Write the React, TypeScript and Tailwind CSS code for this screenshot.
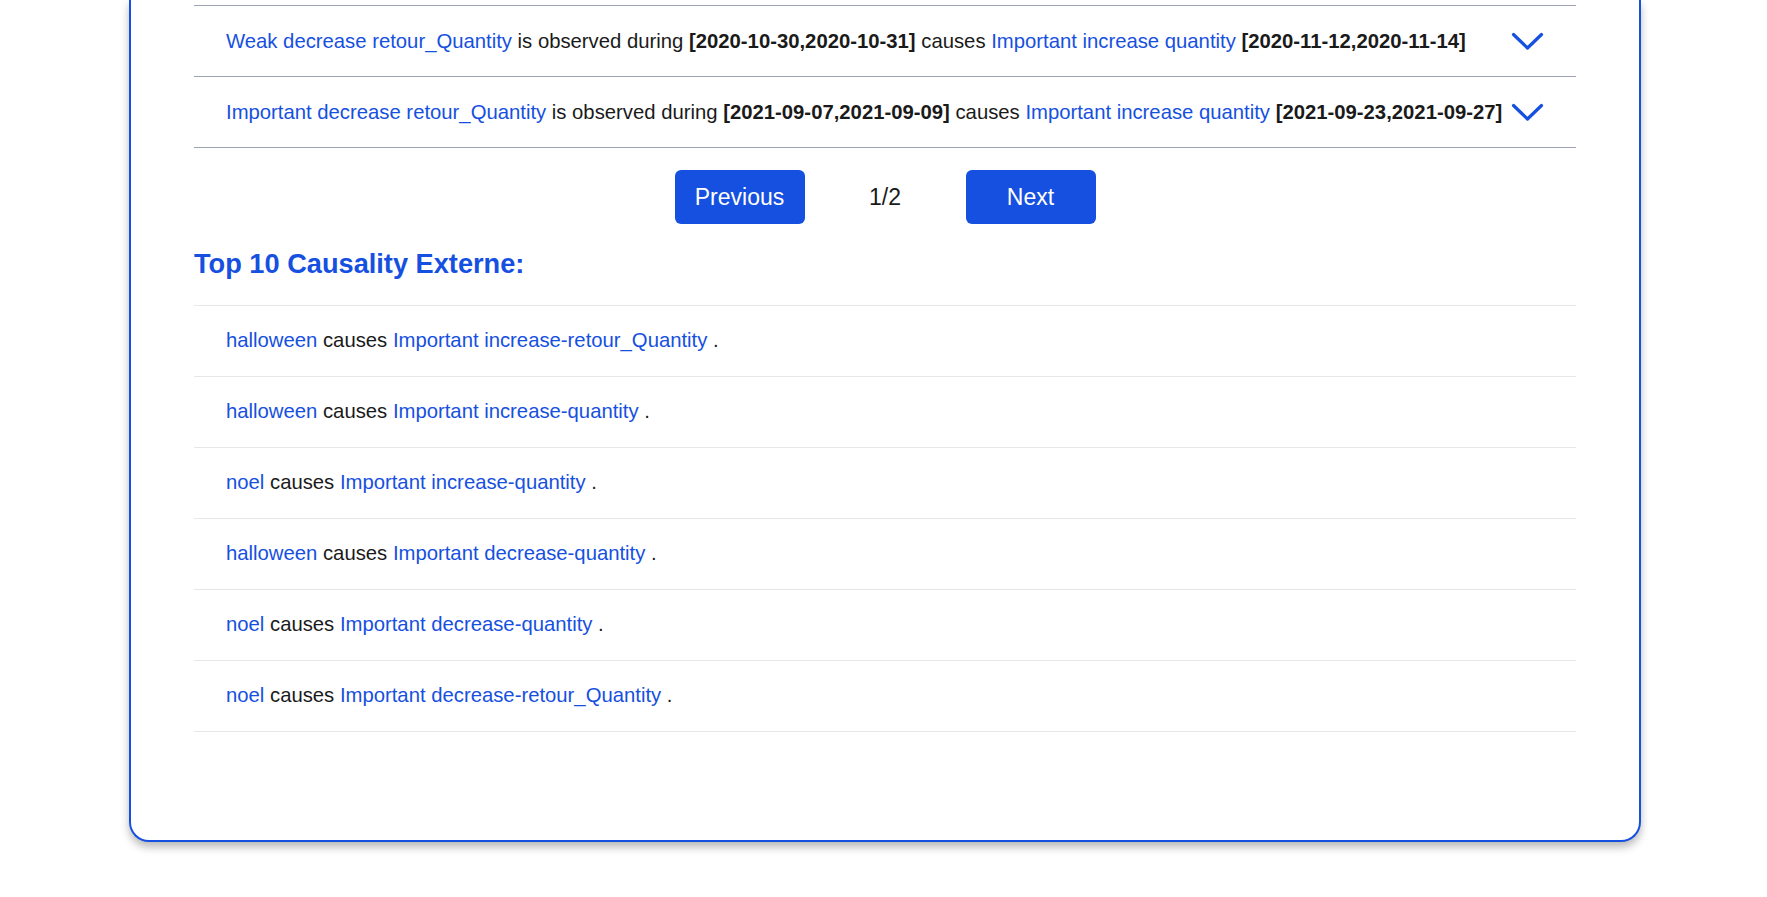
const blue = "text-[#1650e0]";

const patterns = [
  {
    cause: "Weak decrease retour_Quantity",
    during: "[2020-10-30,2020-10-31]",
    effect: "Important increase quantity",
    effectDates: "[2020-11-12,2020-11-14]",
  },
  {
    cause: "Important decrease retour_Quantity",
    during: "[2021-09-07,2021-09-09]",
    effect: "Important increase quantity",
    effectDates: "[2021-09-23,2021-09-27]",
  },
];

const externes = [
  { event: "halloween", effect: "Important increase-retour_Quantity" },
  { event: "halloween", effect: "Important increase-quantity" },
  { event: "noel", effect: "Important increase-quantity" },
  { event: "halloween", effect: "Important decrease-quantity" },
  { event: "noel", effect: "Important decrease-quantity" },
  { event: "noel", effect: "Important decrease-retour_Quantity" },
];

const Chevron = () => (
  <svg width="33" height="19" viewBox="0 0 33 19" fill="none" className="shrink-0">
    <polyline
      points="2.5,2.5 16.5,16 30.5,2.5"
      stroke="#1650e0"
      strokeWidth="3.2"
      strokeLinecap="round"
      strokeLinejoin="round"
    />
  </svg>
);

export default function App() {
  return (
    <div className="min-h-[897px] bg-white font-['Liberation_Sans',Arial,sans-serif] text-[#1a1a1a]">
      <div className="ml-[129px] w-[1512px] rounded-b-[20px] border-2 border-t-0 border-[#1650e0] bg-white px-[63px] pb-[108px] shadow-[0_5px_8px_rgba(0,0,0,0.28)]">
        <div className="h-[6px] border-b border-[#9ca3b4]" />

        {/* patterns */}
        {patterns.map((p, i) => (
          <div
            key={i}
            className="flex h-[71px] items-center justify-between border-b border-[#9ca3b4] pl-8 pr-8 text-[20.3px]"
          >
            <p className="whitespace-nowrap">
              <span className={blue}>{p.cause}</span> is observed during{" "}
              <span className="font-bold">{p.during}</span> causes{" "}
              <span className={blue}>{p.effect}</span>{" "}
              <span className="font-bold">{p.effectDates}</span>
            </p>
            <Chevron />
          </div>
        ))}

        <div className="mt-[22px] flex items-center justify-center text-[23px]">
          <button className="h-[54px] w-[130px] rounded-md bg-[#1650e0] text-white">Previous</button>
          <span className="w-[161px] text-center">1/2</span>
          <button className="h-[54px] w-[130px] rounded-md bg-[#1650e0] text-white">Next</button>
        </div>

        <h2 className={`mt-[24px] text-[27.2px] font-bold leading-8 ${blue}`}>Top 10 Causality Externe:</h2>

        <ul className="mt-[25px] border-t border-[#e5e7eb]">
          {externes.map((e, i) => (
            <li key={i} className="flex h-[71px] items-center border-b border-[#e5e7eb] pb-[2px] pl-8 text-[20.3px]">
              <p>
                <span className={blue}>{e.event}</span> causes <span className={blue}>{e.effect}</span> .
              </p>
            </li>
          ))}
        </ul>
      </div>
    </div>
  );
}
